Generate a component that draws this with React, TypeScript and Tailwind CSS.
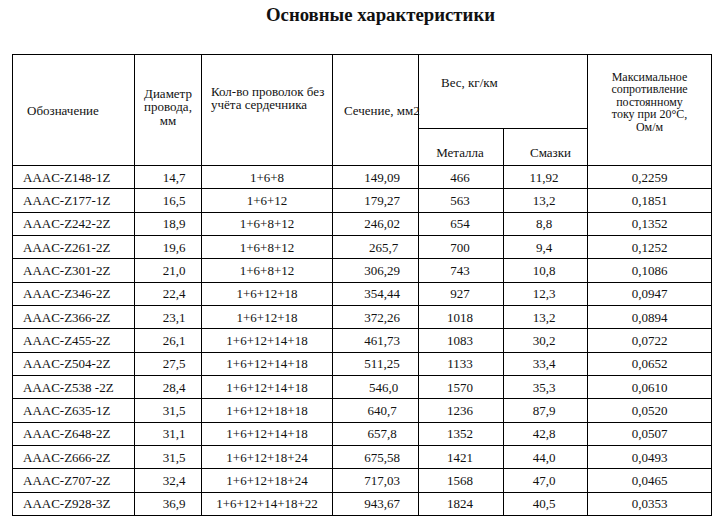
import React from "react";

const rows: string[][] = [
  ["AAAC-Z148-1Z", "14,7", "1+6+8", "149,09", "466", "11,92", "0,2259"],
  ["AAAC-Z177-1Z", "16,5", "1+6+12", "179,27", "563", "13,2", "0,1851"],
  ["AAAC-Z242-2Z", "18,9", "1+6+8+12", "246,02", "654", "8,8", "0,1352"],
  ["AAAC-Z261-2Z", "19,6", "1+6+8+12", "\u00a0265,7", "700", "9,4", "0,1252"],
  ["AAAC-Z301-2Z", "21,0", "1+6+8+12", "306,29", "743", "10,8", "0,1086"],
  ["AAAC-Z346-2Z", "22,4", "1+6+12+18", "354,44", "927", "12,3", "0,0947"],
  ["AAAC-Z366-2Z", "23,1", "1+6+12+18", "372,26", "1018", "13,2", "0,0894"],
  ["AAAC-Z455-2Z", "26,1", "1+6+12+14+18", "461,73", "1083", "30,2", "0,0722"],
  ["AAAC-Z504-2Z", "27,5", "1+6+12+14+18", "511,25", "1133", "33,4", "0,0652"],
  ["AAAC-Z538 -2Z", "28,4", "1+6+12+14+18", "\u00a0546,0", "1570", "35,3", "0,0610"],
  ["AAAC-Z635-1Z", "31,5", "1+6+12+18+18", "640,7", "1236", "87,9", "0,0520"],
  ["AAAC-Z648-2Z", "31,1", "1+6+12+14+18", "657,8", "1352", "42,8", "0,0507"],
  ["AAAC-Z666-2Z", "31,5", "1+6+12+18+24", "675,58", "1421", "44,0", "0,0493"],
  ["AAAC-Z707-2Z", "32,4", "1+6+12+18+24", "717,03", "1568", "47,0", "0,0465"],
  ["AAAC-Z928-3Z", "36,9", "1+6+12+14+18+22", "943,67", "1824", "40,5", "0,0353"],
];

const cell = "border border-black p-0 align-middle";

export default function App() {
  return (
    <div className="bg-white w-[721px] h-[523px] text-[#111] font-['Liberation_Serif','Times_New_Roman',serif]">
      <div className="flex justify-center pl-[40px] pt-[5px]">
        <h1 className="text-[18.75px] leading-[20px] font-bold">Основные характеристики</h1>
      </div>

      <table className="ml-[12px] mt-[29px] w-[699px] table-fixed border-collapse text-[13px] leading-[13px]">
        <colgroup>
          <col className="w-[122px]" />
          <col className="w-[67px]" />
          <col className="w-[131px]" />
          <col className="w-[86px]" />
          <col className="w-[85px]" />
          <col className="w-[84px]" />
          <col className="w-[124px]" />
        </colgroup>
        <thead>
          <tr className="h-[74px]">
            <th rowSpan={2} className={`${cell} text-left font-normal pl-[14px]`}>
              Обозначение
            </th>
            <th rowSpan={2} className={`${cell} text-center font-normal leading-[13.5px] pb-[6px]`}>
              Диаметр
              <br />
              провода,
              <br />
              мм
            </th>
            <th rowSpan={2} className={`${cell} text-left font-normal leading-[13.5px] pl-[9px] pb-[24px]`}>
              Кол-во проволок без
              <br />
              учёта сердечника
            </th>
            <th rowSpan={2} className={`${cell} text-left font-normal pl-[11px] whitespace-nowrap overflow-visible`}>
              Сечение, мм2
            </th>
            <th colSpan={2} className={`${cell} text-left font-normal pl-[22px] pb-[18px]`}>
              Вес, кг/км
            </th>
            <th rowSpan={2} className={`${cell} text-center font-normal text-[12px] leading-[12.5px] pb-[16px]`}>
              Максимальное
              <br />
              сопротивление
              <br />
              постоянному
              <br />
              току при 20°С,
              <br />
              Ом/м
            </th>
          </tr>
          <tr className="h-[37px]">
            <th className={`${cell} text-center font-normal pt-[10px] pr-[2px]`}>Металла</th>
            <th className={`${cell} text-center font-normal pt-[10px] pl-[10px]`}>Смазки</th>
          </tr>
        </thead>
        <tbody>
          {rows.map((r) => (
            <tr key={r[0]} className="h-[23.33px]">
              <td className={`${cell} text-left pl-[10px] whitespace-pre`}>{r[0]}</td>
              <td className={`${cell} text-center pl-[12px]`}>{r[1]}</td>
              <td className={`${cell} text-center`}>{r[2]}</td>
              <td className={`${cell} text-center pl-[13px]`}>{r[3]}</td>
              <td className={`${cell} text-center pr-[2px]`}>{r[4]}</td>
              <td className={`${cell} text-center pr-[3px]`}>{r[5]}</td>
              <td className={`${cell} text-center`}>{r[6]}</td>
            </tr>
          ))}
        </tbody>
      </table>
    </div>
  );
}
